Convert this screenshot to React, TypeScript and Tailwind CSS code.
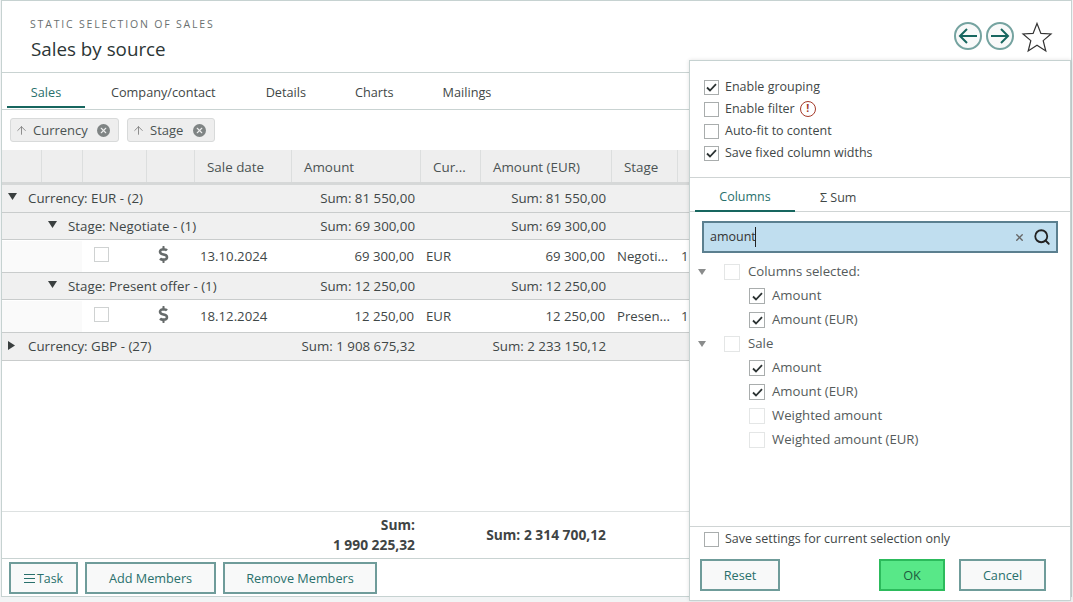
import { ArrowUp, Search, X } from "lucide-react";
import { FaDollarSign } from "react-icons/fa";

const font = "font-['Open_Sans',sans-serif]";

function Check({ checked, size = "md", faint }: { checked?: boolean; size?: "md" | "sm"; faint?: boolean }) {
  return (
    <span
      className={`flex shrink-0 items-center justify-center border bg-white ${
        size === "md" ? "size-[15px]" : "size-4"
      } ${faint ? "border-[#e4e6e6]" : "border-[#a9adad]"}`}
    >
      {checked && (
        <svg width="11" height="9" viewBox="0 0 11 9" fill="none">
          <path d="M1 4.5 4 7.5 10 1.2" stroke="#2c3333" strokeWidth="1.8" />
        </svg>
      )}
    </span>
  );
}

function Chip({ label, width }: { label: string; width: string }) {
  return (
    <div className={`flex h-6 items-center rounded-[3px] border border-[#d8dada] bg-[#eeeeee] pl-[4px] text-[13px] text-[#4b5353] ${width}`}>
      <ArrowUp size={13} strokeWidth={1.5} color="#777" className="mr-[5px] shrink-0" />
      <span className="mt-px">{label}</span>
      <span className="ml-auto mr-[8px] flex size-[13px] items-center justify-center rounded-full bg-[#7f8484]">
        <X size={9} strokeWidth={3} color="#eee" />
      </span>
    </div>
  );
}

const headerCols = [
  ["w-[40px]", ""],
  ["w-[41px]", ""],
  ["w-[64px]", ""],
  ["w-[48px]", ""],
  ["w-[97px] pl-[12px]", "Sale date"],
  ["w-[129px] pl-[12px]", "Amount"],
  ["w-[60px] pl-[12px]", "Cur..."],
  ["w-[131px] pl-[12px]", "Amount (EUR)"],
  ["w-[66px] pl-[12px]", "Stage"],
  ["w-[12px]", ""],
];

function GroupRow({ label, sum, eur, indent, open, h }: { label: string; sum: string; eur: string; indent?: boolean; open?: boolean; h: string }) {
  return (
    <div className={`flex items-center border-b border-[#c9cccc] bg-[#f0f0f0] pt-px text-[13.3px] text-[#3f4747] ${h}`}>
      <div className={`flex w-[290px] items-center ${indent ? "pl-[46px]" : "pl-[6px]"}`}>
        <span className="w-[20px] text-[#333]">
          {open ? (
            <svg width="9" height="7" viewBox="0 0 9 7" className="-mt-[5px]"><path d="M0 0H9L4.5 7Z" fill="#3a3f3f" /></svg>
          ) : (
            <svg width="7" height="9" viewBox="0 0 7 9" className="-mt-[3px]"><path d="M0 0V9L7 4.5Z" fill="#3a3f3f" /></svg>
          )}
        </span>
        <span>{label}</span>
      </div>
      <div className="w-[123px] text-right">{sum}</div>
      <div className="w-[191px] text-right">{eur}</div>
    </div>
  );
}

function DataRow({ date, amount, stage }: { date: string; amount: string; stage: string }) {
  return (
    <div className="flex h-[33px] items-center border-b border-[#c9cccc] bg-white pt-px text-[13.2px] text-[#3f4747]">
      <div className="h-full w-[80px] bg-[#fafafa]" />
      <div className="-mt-[5px] flex w-[73px] pl-[12px]">
        <span className="size-[15px] border border-[#cfd2d2]" />
      </div>
      <div className="-mt-[5px] w-[45px]">
        <FaDollarSign size={17} color="#666b6b" />
      </div>
      <div className="w-[99px]">{date}</div>
      <div className="w-[115px] text-right">{amount}</div>
      <div className="w-[65px] pl-[12px]">EUR</div>
      <div className="w-[126px] text-right">{amount}</div>
      <div className="w-[66px] pl-[12px] whitespace-nowrap">{stage}</div>
      <div className="pl-[10px] text-[#444]">1</div>
    </div>
  );
}

function SmallButton({ label, width, className = "" }: { label: string; width: string; className?: string }) {
  return (
    <button className={`flex h-[32px] items-center justify-center border-2 border-[#6f9c9a] bg-[#f8f9f9] text-[12.7px] text-[#29706c] ${width} ${className}`}>
      <span className="mt-[2px]">{label}</span>
    </button>
  );
}

function TreeItem({ label, checked, group, faint }: { label: string; checked?: boolean; group?: boolean; faint?: boolean }) {
  return (
    <div className={`flex h-6 items-center ${group ? "pl-[2px]" : "pl-[53px]"}`}>
      {group && (
        <svg width="8" height="6" viewBox="0 0 8 6" className="mr-[18px]"><path d="M0 0H8L4 6Z" fill="#8a8c8c" /></svg>
      )}
      <Check size="sm" checked={checked} faint={faint || group} />
      <span className={`text-[13.2px] text-[#555b5b] ${group ? "ml-[8px]" : "ml-[7px]"}`}>{label}</span>
    </div>
  );
}

function OptionRow({ label, checked, children }: { label: string; checked?: boolean; children?: React.ReactNode }) {
  return (
    <div className="flex h-[22px] items-center gap-[6px]">
      <Check checked={checked} />
      <span>{label}</span>
      {children}
    </div>
  );
}

function NavArrow({ d }: { d: string }) {
  return (
    <span className="flex size-[28px] items-center justify-center rounded-full border-2 border-[#75a3a0] bg-[#f8f9f9]">
      <svg width="20" height="18" viewBox="0 0 20 18" fill="none">
        <path d={d} stroke="#17665f" strokeWidth="2" />
      </svg>
    </span>
  );
}

export default function App() {
  return (
    <div className={`relative h-[602px] w-[1073px] overflow-hidden bg-[#f2f4f5] pl-px ${font}`}>
      <div className="flex h-[597px] w-[1071px] flex-col border border-[#c6d2d1] bg-white">
        <div className="flex h-[72px] shrink-0 border-b border-[#c9d3d2]">
          <div className="pl-[28px] pt-[15px]">
            <div className="text-[10.5px] leading-[16px] tracking-[1.82px] text-[#6a7070]">STATIC SELECTION OF SALES</div>
            <div className="ml-px mt-[4px] text-[18.8px] leading-[26px] text-[#2c3535]">Sales by source</div>
          </div>
          <div className="ml-auto mr-[18px] mt-[21px] flex items-start gap-[4px]">
            <NavArrow d="M19 9H2M9 2 2 9 9 16" />
            <NavArrow d="M1 9H18M11 2 18 9 11 16" />
            <svg width="32" height="32" viewBox="0 0 32 32" className="ml-[3px] -mt-[1px]" fill="none">
              <path d="M16 2.5 19.9 12.4 30 13 22.2 19.6 24.8 30 16 24.2 7.2 30 9.8 19.6 2 13 12.1 12.4Z" stroke="#333" strokeWidth="1.2" />
            </svg>
          </div>
        </div>

        <div className="flex h-[37px] shrink-0 border-b border-[#c9d3d2] pl-[5px] text-[12.7px] text-[#3f4747]">
          <div className="flex h-[35px] w-[78px] items-center justify-center border-b-2 border-[#17665f] pt-[7px] text-[#29706c]">Sales</div>
          <div className="ml-[26px] flex h-[35px] items-center pt-[5px]">Company/contact</div>
          <div className="ml-[50px] flex h-[35px] items-center pt-[5px]">Details</div>
          <div className="ml-[49px] flex h-[35px] items-center pt-[5px]">Charts</div>
          <div className="ml-[49px] flex h-[35px] items-center pt-[5px]">Mailings</div>
        </div>

        <div className="flex h-[40px] shrink-0 items-center gap-[8px] pl-[8px]">
          <Chip label="Currency" width="w-[109px]" />
          <Chip label="Stage" width="w-[88px]" />
        </div>

        <div className="flex h-[35px] shrink-0 border-b-[3px] border-[#d6d8d8] bg-[#eeeeee] text-[13.4px] text-[#4b5353]">
          {headerCols.map(([cls, label], i) => (
            <div key={i} className={`flex items-center whitespace-nowrap border-r border-[#dcdede] pt-[3px] ${cls}`}>{label}</div>
          ))}
        </div>

        <GroupRow label="Currency: EUR - (2)" sum="Sum: 81 550,00" eur="Sum: 81 550,00" open h="h-[28px]" />
        <GroupRow label="Stage: Negotiate - (1)" sum="Sum: 69 300,00" eur="Sum: 69 300,00" indent open h="h-[27px]" />
        <DataRow date="13.10.2024" amount="69 300,00" stage="Negoti..." />
        <GroupRow label="Stage: Present offer - (1)" sum="Sum: 12 250,00" eur="Sum: 12 250,00" indent open h="h-[27px]" />
        <DataRow date="18.12.2024" amount="12 250,00" stage="Presen..." />
        <GroupRow label="Currency: GBP - (27)" sum="Sum: 1 908 675,32" eur="Sum: 2 233 150,12" h="h-[28px]" />

        <div className="flex-1" />

        <div className="flex h-[47px] shrink-0 items-center border-t border-[#dde1e1] text-[13.8px] font-bold text-[#3f4444]">
          <div className="w-[413px] text-right leading-[20px]">
            <div>Sum:</div>
            <div>1 990 225,32</div>
          </div>
          <div className="w-[191px] text-right">Sum: 2 314 700,12</div>
        </div>

        <div className="flex h-[38px] shrink-0 gap-[7px] border-t border-[#c9d3d2] pl-[7px] pt-[3px]">
          <button className="flex h-[32px] w-[69px] items-center justify-center gap-[2px] border-2 border-[#6f9c9a] bg-[#f8f9f9] text-[12.4px] text-[#29706c]">
            <span className="flex w-[11px] flex-col gap-[3px]">
              <span className="h-px bg-[#29706c]" />
              <span className="h-px bg-[#29706c]" />
              <span className="h-px bg-[#29706c]" />
            </span>
            <span className="mt-[2px]">Task</span>
          </button>
          <SmallButton label="Add Members" width="w-[131px]" />
          <SmallButton label="Remove Members" width="w-[154px]" />
        </div>
      </div>

      <div className="absolute left-[689px] top-[60px] flex h-[541px] w-[382px] flex-col border border-[#c6d2d1] bg-white text-[12.5px] text-[#3f4747] shadow-[0_0_4px_rgba(0,0,0,0.12)]">
        <div className="flex h-[117px] shrink-0 flex-col justify-start border-b border-[#cfd4d4] pl-[14px] pt-[15px]">
          <OptionRow label="Enable grouping" checked />
          <OptionRow label="Enable filter">
            <span className="-ml-[1px] flex size-[16px] items-center justify-center rounded-full border-[1.5px] border-[#a53a2a] text-[10.5px] font-bold text-[#a53a2a]">!</span>
          </OptionRow>
          <OptionRow label="Auto-fit to content" />
          <OptionRow label="Save fixed column widths" checked />
        </div>

        <div className="flex h-[34px] shrink-0 border-b border-[#cfd4d4] pl-[5px]">
          <div className="flex h-[34px] w-[100px] items-center justify-center border-b-2 border-[#17665f] pt-[7px] text-[#29706c]">Columns</div>
          <div className="ml-[25px] flex h-[33px] items-center pt-[7px]">Σ Sum</div>
        </div>

        <div className="flex-1 pl-[12px] pt-[9px]">
          <div className="flex h-[32px] w-[356px] items-center border-2 border-[#5b7f8f] bg-[#c0deef] pl-[6px] pr-[5px] text-[#333]">
            <span>amount</span>
            <span className="-ml-px h-[20px] w-px bg-[#222]" />
            <X size={11} strokeWidth={3} color="#666" className="ml-auto mr-[8px]" />
            <Search size={18} strokeWidth={2.4} color="#222" />
          </div>
          <div className="-ml-[6px] mt-[7px]">
            <TreeItem label="Columns selected:" group />
            <TreeItem label="Amount" checked />
            <TreeItem label="Amount (EUR)" checked />
            <TreeItem label="Sale" group />
            <TreeItem label="Amount" checked />
            <TreeItem label="Amount (EUR)" checked />
            <TreeItem label="Weighted amount" faint />
            <TreeItem label="Weighted amount (EUR)" faint />
          </div>
        </div>

        <div className="flex h-[74px] shrink-0 flex-col border-t border-[#cfd4d4] px-[10px]">
          <div className="flex h-[22px] items-center gap-[6px] pl-[4px] pt-[2px]">
            <Check />
            <span>Save settings for current selection only</span>
          </div>
          <div className="mt-[10px] flex">
            <SmallButton label="Reset" width="w-[80px]" />
            <button className="ml-[99px] flex h-[32px] w-[66px] items-center justify-center border-2 border-[#2cbb5c] bg-[#58e888] text-[12.7px] text-[#1e5c40]"><span className="mt-[2px]">OK</span></button>
            <SmallButton label="Cancel" width="w-[87px]" className="ml-[14px]" />
          </div>
        </div>
      </div>
    </div>
  );
}
